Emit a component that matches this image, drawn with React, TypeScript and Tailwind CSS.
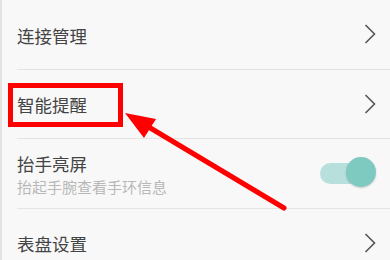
import React from 'react';

const font = { fontFamily: '"Noto Sans CJK SC", "Noto Sans", sans-serif' };

function Chevron() {
  return (
    <svg width="12" height="20" viewBox="0 0 12 20" className="shrink-0">
      <path d="M1.5 1 L10.5 10 L1.5 19" fill="none" stroke="#555" strokeWidth="1.6" />
    </svg>
  );
}

function Row({ title, sub, right }: { title: string; sub?: string; right: React.ReactNode }) {
  return (
    <div className="h-[69.5px] flex items-center justify-between pr-[14px] border-b border-[#e4e4e4]">
      <div className="flex flex-col pt-[3px]">
        <span className="text-[17.5px] leading-[24px] text-[#444]">{title}</span>
        {sub && <span className="text-[15px] leading-[20px] text-[#b8b8b8] mt-[1px]">{sub}</span>}
      </div>
      {right}
    </div>
  );
}

function Toggle() {
  return (
    <div className="relative w-[56px] h-[32px] mr-[0px]">
      <div className="absolute left-0 top-[6px] w-[40px] h-[21px] rounded-full bg-[#b7e0dc]" />
      <div className="absolute right-0 top-0 w-[30px] h-[30px] rounded-full bg-[#7fcac0] shadow-[0_1px_2px_rgba(0,0,0,0.2)]" />
    </div>
  );
}

export default function App() {
  return (
    <div className="relative w-[390px] h-[260px] overflow-hidden bg-[#f8f8f8] border-l-2 border-[#e2e2e2]" style={font}>
      <div className="pl-[15px]">
        <Row title="连接管理" right={<Chevron />} />
        <Row title="智能提醒" right={<Chevron />} />
        <Row title="抬手亮屏" sub="抬起手腕查看手环信息" right={<Toggle />} />
        <Row title="表盘设置" right={<Chevron />} />
      </div>

      <div className="absolute left-[6px] top-[83px] w-[115px] h-[44px] border-[5px] border-[#ff0000]" />

      <svg className="absolute left-0 top-0" width="390" height="260" viewBox="0 0 390 260">
        <line x1="140" y1="123" x2="282" y2="208" stroke="#ff0000" strokeWidth="5" strokeLinecap="round" />
        <polygon points="123,113 154,119 142,138" fill="#ff0000" />
      </svg>
    </div>
  );
}
